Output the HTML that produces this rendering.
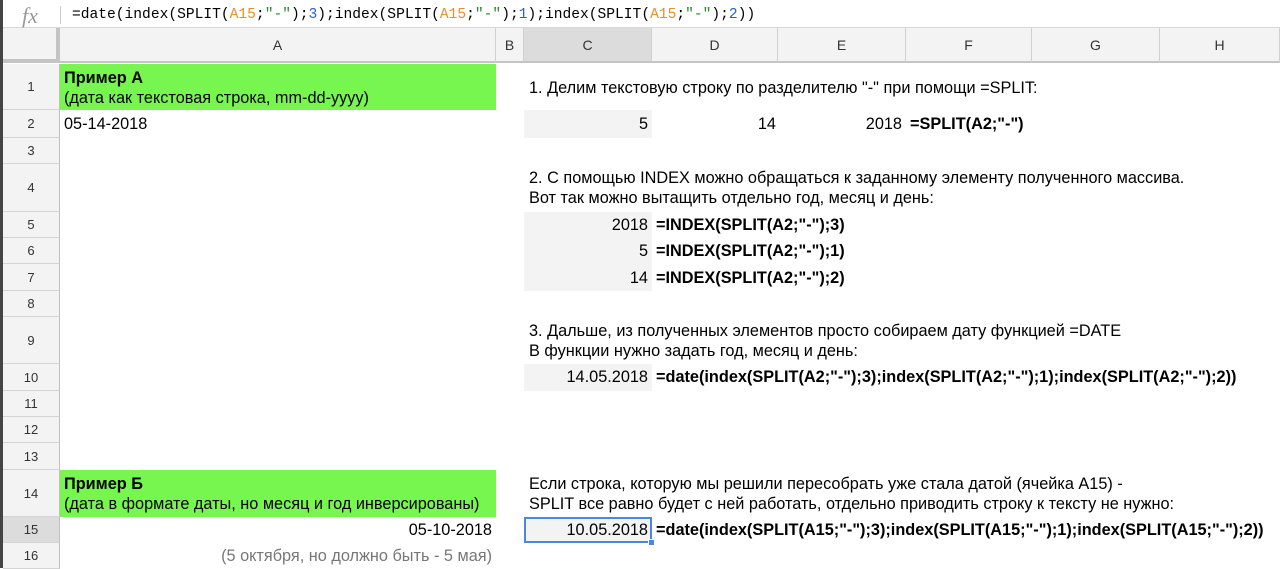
<!DOCTYPE html>
<html><head><meta charset="utf-8"><style>
*{margin:0;padding:0;box-sizing:border-box}
body{width:1280px;height:568px;overflow:hidden;background:#fff;font-family:"Liberation Sans",Arial,sans-serif;position:relative;color:#000}
.a{position:absolute;white-space:nowrap}
.t{font-size:16.3px;line-height:19px}
.b{font-weight:bold}
.rn{position:absolute;left:3px;width:57px;background:#f3f3f3;border-bottom:1px solid #d4d4d4;border-right:1px solid #c0c0c0;font-size:13px;color:#333;text-align:center;display:flex;align-items:center;justify-content:center}
.ch{position:absolute;top:28px;height:35px;background:#f3f3f3;border-right:1px solid #d0d0d0;border-bottom:2px solid #c4c4c4;font-size:14px;color:#333;display:flex;align-items:center;justify-content:center}
.g{position:absolute;background:#f3f3f3}
.mono{font-family:"Liberation Mono",monospace;font-size:14.6px}
</style></head><body>
<div class="a" style="left:0;top:0;width:3px;height:568px;background:#444"></div>
<div class="a" style="left:3px;top:0;width:1277px;height:28px;background:#fff;border-bottom:1px solid #d8d8d8"></div>
<div class="a" style="left:22px;top:3px;font-family:'Liberation Serif',serif;font-style:italic;font-size:22px;color:#999">fx</div>
<div class="a" style="left:60px;top:6px;width:1px;height:18px;background:#ccc"></div>
<div class="a mono" style="left:72px;top:6px;line-height:18px">=date(index(SPLIT(<span style="color:#e8902a">A15</span>;<span style="color:#2a8a2a">"-"</span>);<span style="color:#2a5fd0">3</span>);index(SPLIT(<span style="color:#e8902a">A15</span>;<span style="color:#2a8a2a">"-"</span>);<span style="color:#2a5fd0">1</span>);index(SPLIT(<span style="color:#e8902a">A15</span>;<span style="color:#2a8a2a">"-"</span>);<span style="color:#2a5fd0">2</span>))</div>

<div class="a" style="left:3px;top:28px;width:57px;height:35px;background:#f3f3f3;border-right:4px solid #c4c4c4;border-bottom:4px solid #c4c4c4"></div>
<div class="ch" style="left:60px;width:436px">A</div>
<div class="ch" style="left:496px;width:28px">B</div>
<div class="ch" style="left:524px;width:128px;background:#dcdcdc">C</div>
<div class="ch" style="left:652px;width:126px">D</div>
<div class="ch" style="left:778px;width:128px">E</div>
<div class="ch" style="left:906px;width:126px">F</div>
<div class="ch" style="left:1032px;width:128px">G</div>
<div class="ch" style="left:1160px;width:120px">H</div>

<div class="rn" style="top:64px;height:46px">1</div>
<div class="rn" style="top:110px;height:28px">2</div>
<div class="rn" style="top:138px;height:26px">3</div>
<div class="rn" style="top:164px;height:48px">4</div>
<div class="rn" style="top:212px;height:26px">5</div>
<div class="rn" style="top:238px;height:26px">6</div>
<div class="rn" style="top:264px;height:27px">7</div>
<div class="rn" style="top:291px;height:26px">8</div>
<div class="rn" style="top:317px;height:47px">9</div>
<div class="rn" style="top:364px;height:27px">10</div>
<div class="rn" style="top:391px;height:26px">11</div>
<div class="rn" style="top:417px;height:26px">12</div>
<div class="rn" style="top:443px;height:27px">13</div>
<div class="rn" style="top:470px;height:47px">14</div>
<div class="rn" style="top:517px;height:26px;background:#dcdcdc">15</div>
<div class="rn" style="top:543px;height:26px">16</div>

<div class="a" style="left:60px;top:64px;width:436px;height:46px;background:#78f650"></div>
<div class="a" style="left:60px;top:470px;width:436px;height:47px;background:#78f650"></div>
<div class="a t b" style="left:64px;top:69px">Пример А</div>
<div class="a t" style="left:64px;top:89px">(дата как текстовая строка, mm-dd-yyyy)</div>
<div class="a t" style="left:64px;top:115px">05-14-2018</div>
<div class="a t b" style="left:64px;top:475px">Пример Б</div>
<div class="a t" style="left:64px;top:495px">(дата в формате даты, но месяц и год инверсированы)</div>
<div class="a t" style="left:60px;top:521px;width:432px;text-align:right">05-10-2018</div>
<div class="a t" style="left:60px;top:547px;width:432px;text-align:right;color:#777">(5 октября, но должно быть - 5 мая)</div>

<div class="g" style="left:524px;top:110px;width:128px;height:28px"></div>
<div class="g" style="left:524px;top:212px;width:128px;height:79px"></div>
<div class="g" style="left:524px;top:364px;width:128px;height:27px"></div>
<div class="g" style="left:524px;top:517px;width:128px;height:26px;border:2px solid #4a86e8"></div>
<div class="a" style="left:648px;top:539px;width:7px;height:7px;background:#4a86e8;border:1px solid #fff"></div>

<div class="a t" style="left:529px;top:79px">1. Делим текстовую строку по разделителю "-" при помощи =SPLIT:</div>
<div class="a t" style="left:524px;top:115px;width:124px;text-align:right">5</div>
<div class="a t" style="left:652px;top:115px;width:124px;text-align:right">14</div>
<div class="a t" style="left:778px;top:115px;width:124px;text-align:right">2018</div>
<div class="a t b" style="left:910px;top:115px">=SPLIT(A2;"-")</div>

<div class="a t" style="left:529px;top:169px">2. С помощью INDEX можно обращаться к заданному элементу полученного массива.</div>
<div class="a t" style="left:529px;top:189px">Вот так можно вытащить отдельно год, месяц и день:</div>
<div class="a t" style="left:524px;top:216px;width:124px;text-align:right">2018</div>
<div class="a t b" style="left:656px;top:216px">=INDEX(SPLIT(A2;"-");3)</div>
<div class="a t" style="left:524px;top:242px;width:124px;text-align:right">5</div>
<div class="a t b" style="left:656px;top:242px">=INDEX(SPLIT(A2;"-");1)</div>
<div class="a t" style="left:524px;top:269px;width:124px;text-align:right">14</div>
<div class="a t b" style="left:656px;top:269px">=INDEX(SPLIT(A2;"-");2)</div>

<div class="a t" style="left:529px;top:322px">3. Дальше, из полученных элементов просто собираем дату функцией =DATE</div>
<div class="a t" style="left:529px;top:342px">В функции нужно задать год, месяц и день:</div>
<div class="a t" style="left:524px;top:368px;width:124px;text-align:right">14.05.2018</div>
<div class="a t b" style="left:656px;top:368px">=date(index(SPLIT(A2;"-");3);index(SPLIT(A2;"-");1);index(SPLIT(A2;"-");2))</div>

<div class="a t" style="left:529px;top:475px">Если строка, которую мы решили пересобрать уже стала датой (ячейка A15) -</div>
<div class="a t" style="left:529px;top:495px">SPLIT все равно будет с ней работать, отдельно приводить строку к тексту не нужно:</div>
<div class="a t" style="left:524px;top:521px;width:124px;text-align:right">10.05.2018</div>
<div class="a t b" style="left:656px;top:521px">=date(index(SPLIT(A15;"-");3);index(SPLIT(A15;"-");1);index(SPLIT(A15;"-");2))</div>
</body></html>
